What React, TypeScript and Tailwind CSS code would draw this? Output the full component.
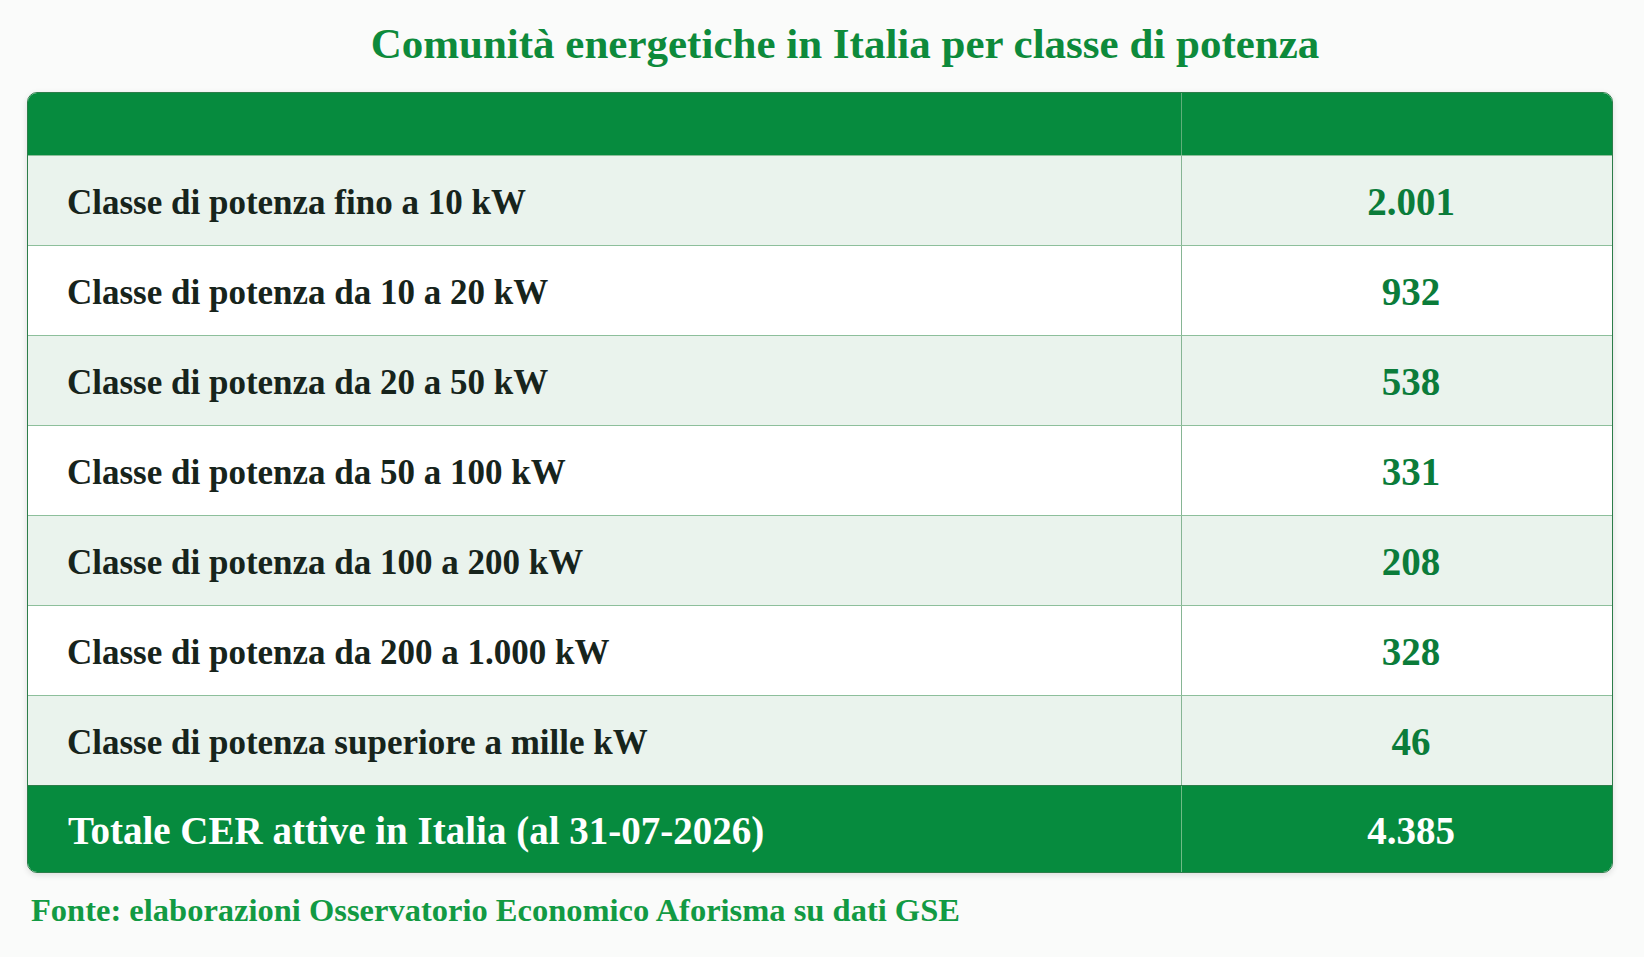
import React from 'react'

interface PowerRow {
  label: string
  value: string
}

const rows: PowerRow[] = [
  { label: 'Classe di potenza fino a 10 kW', value: '2.001' },
  { label: 'Classe di potenza da 10 a 20 kW', value: '932' },
  { label: 'Classe di potenza da 20 a 50 kW', value: '538' },
  { label: 'Classe di potenza da 50 a 100 kW', value: '331' },
  { label: 'Classe di potenza da 100 a 200 kW', value: '208' },
  { label: 'Classe di potenza da 200 a 1.000 kW', value: '328' },
  { label: 'Classe di potenza superiore a mille kW', value: '46' },
]

const serif = "font-['Liberation_Serif','Times_New_Roman',serif]"

export default function App() {
  return (
    <div className={`w-full h-[957px] bg-[#fafbfa] pl-[27px] pr-[31px] pt-[19px] ${serif}`}>
      {/* Title */}
      <h1 className="text-center text-[43px] leading-[49px] font-bold text-[#0d8a3b] pl-[50px] mb-[24px]">
        Comunità energetiche in Italia per classe di potenza
      </h1>

      {/* Table */}
      <div className="rounded-[10px] overflow-hidden border border-[#2d7d4a] shadow-[0_2px_6px_rgba(0,0,0,0.12)]">
        {/* Header */}
        <div className="grid grid-cols-[1154px_1fr] h-[62px] bg-[#068b3e]">
          <div className="border-r border-[#5fae7a]" />
          <div />
        </div>

        {/* Body */}
        {rows.map((row, idx) => (
          <div
            key={row.label}
            className={`grid grid-cols-[1154px_1fr] h-[90px] border-t border-[#8dbf9b] ${
              idx % 2 === 0 ? 'bg-[#eaf3ed]' : 'bg-white'
            }`}
          >
            <div className="flex items-center pl-[39px] pt-[5px] border-r border-[#86b594] text-[35px] font-bold text-[#17241c]">
              {row.label}
            </div>
            <div className="flex items-center justify-center pl-[28px] pt-[3px] text-[39px] font-bold text-[#0b7c3a]">
              {row.value}
            </div>
          </div>
        ))}

        {/* Total */}
        <div className="grid grid-cols-[1154px_1fr] h-[87px] bg-[#068b3e] border-t border-[#2d7d4a]">
          <div className="flex items-center pl-[40px] pt-[4px] border-r border-[#6fba86] text-[39px] font-bold text-white">
            Totale CER attive in Italia (al 31-07-2026)
          </div>
          <div className="flex items-center justify-center pl-[28px] pt-[4px] text-[39px] font-bold text-white">
            4.385
          </div>
        </div>
      </div>

      {/* Source */}
      <p className="mt-[19px] pl-[4px] text-[32.5px] leading-[37px] font-bold text-[#129a43]">
        Fonte: elaborazioni Osservatorio Economico Aforisma su dati GSE
      </p>
    </div>
  )
}
